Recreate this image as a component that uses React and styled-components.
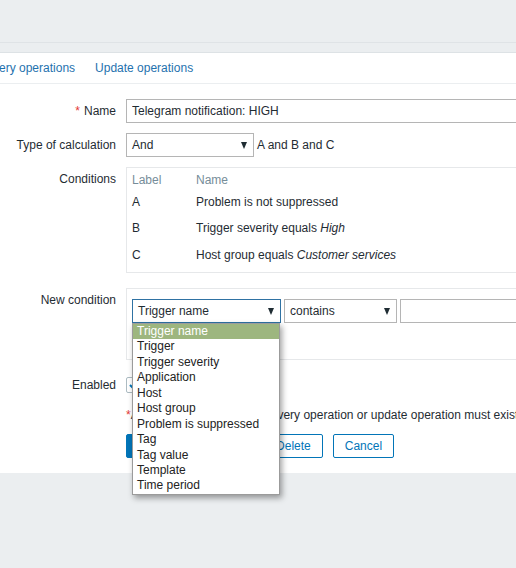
import React from 'react';
import styled, { createGlobalStyle } from 'styled-components';

const Global = createGlobalStyle`
  html, body { margin: 0; padding: 0; overflow: hidden; background: #ebeef0; }
  body { font-family: "Liberation Sans", Arial, sans-serif; font-size: 12px; color: #1f2c33; }
  * { box-sizing: border-box; }
`;

const Page = styled.div`
  width: 516px;
  height: 568px;
  overflow: hidden;
  background: #ebeef0;
`;

const TopBar = styled.div`
  height: 43px;
  border-bottom: 1px solid #dfe3e6;
  margin-bottom: 9px;
`;

const Panel = styled.div`
  background: #fff;
  border-top: 1px solid #dde2e5;
  padding-bottom: 15px;
`;

const Tabs = styled.div`
  display: flex;
  height: 31px;
  margin-left: -45px;
  border-bottom: 1px solid #ebeef0;
`;

const Tab = styled.span`
  padding: 1px 10px 0;
  line-height: 29px;
  color: #1f72ae;
  white-space: nowrap;
`;

const Form = styled.div`
  padding-top: 15px;
`;

const Row = styled.div`
  display: flex;
  align-items: flex-start;
  margin-top: ${p => p.$top || 0}px;
`;

const Label = styled.div`
  flex: 0 0 126px;
  padding-right: 10px;
  text-align: right;
  line-height: 24px;
  white-space: nowrap;
`;

const Asterisk = styled.span`
  color: #e33734;
  margin-right: ${p => p.$gap || 0}px;
`;

const Field = styled.div`
  display: flex;
  align-items: center;
  flex-wrap: nowrap;
  white-space: nowrap;
  position: relative;
`;

const TextInput = styled.input`
  width: ${p => p.$w}px;
  height: 24px;
  flex-shrink: 0;
  border: 1px solid #b5b5b5;
  padding: 0 5px;
  font: inherit;
  color: #1f2c33;
  background: #fff;
  outline: none;
`;

const SelectBox = styled.div`
  position: relative;
  flex-shrink: 0;
  display: flex;
  align-items: center;
  justify-content: space-between;
  width: ${p => p.$w}px;
  height: 24px;
  padding: 0 6px 0 5px;
  border: 1px solid ${p => (p.$focus ? '#2f72a3' : '#b5b5b5')};
  background: #fff;
  margin-right: ${p => p.$mr || 0}px;
`;

const Arrow = styled.span`
  width: 0;
  height: 0;
  border-left: 3.5px solid transparent;
  border-right: 3.5px solid transparent;
  border-top: 7px solid #1f2c33;
`;

const Hint = styled.span`
  margin-left: 3px;
`;

const Box = styled.div`
  width: 453px;
  flex-shrink: 0;
  border: 1px solid #e6e8ea;
  padding: ${p => p.$pad};
`;

const CondTable = styled.div`
  display: grid;
  grid-template-columns: 64px 1fr;
`;

const HeadCell = styled.div`
  color: #768d99;
  height: 15.5px;
  line-height: 15.5px;
`;

const Cell = styled.div`
  height: 26.5px;
  line-height: 26.5px;
  white-space: nowrap;
`;

const NewCondLine = styled.div`
  display: flex;
  align-items: center;
`;

const AddLink = styled.div`
  line-height: 31px;
  color: #1f72ae;
`;

const DropList = styled.ul`
  position: absolute;
  top: calc(100% + 1px);
  left: -1px;
  width: 148px;
  margin: 0;
  padding: 0;
  list-style: none;
  background: #fff;
  border: 1px solid #9b9b9b;
  box-shadow: 2px 3px 6px rgba(0, 0, 0, 0.38);
  z-index: 10;
`;

const Option = styled.li`
  height: 15.45px;
  line-height: 15.45px;
  padding: 0 4px;
  white-space: nowrap;
  color: ${p => (p.$active ? '#fff' : '#222')};
  background: ${p => (p.$active ? '#9db67f' : 'transparent')};
`;

const Checkbox = styled.span`
  display: inline-flex;
  align-items: center;
  justify-content: center;
  width: 16px;
  height: 16px;
  margin-top: 4px;
  border: 1px solid #acbbc2;
  border-radius: 2px;
  background: #fff;
`;

const Warning = styled.div`
  line-height: 20px;
  white-space: nowrap;
`;

const Buttons = styled.div`
  display: flex;
  gap: 10px;
`;

const Button = styled.button`
  height: 24px;
  padding: 0 11px;
  border: 1px solid #0275b8;
  border-radius: 2px;
  font: inherit;
  color: ${p => (p.$primary ? '#fff' : '#0275b8')};
  background: ${p => (p.$primary ? '#0275b8' : '#fff')};
  cursor: pointer;
`;

const options = [
  'Trigger name',
  'Trigger',
  'Trigger severity',
  'Application',
  'Host',
  'Host group',
  'Problem is suppressed',
  'Tag',
  'Tag value',
  'Template',
  'Time period',
];

export default function App() {
  return (
    <Page>
      <Global />
      <TopBar />
      <Panel>
        <Tabs>
          <Tab>Recovery operations</Tab>
          <Tab>Update operations</Tab>
        </Tabs>
        <Form>
          <Row>
            <Label><Asterisk $gap={4}>*</Asterisk>Name</Label>
            <Field>
              <TextInput $w={453} readOnly value="Telegram notification: HIGH" />
            </Field>
          </Row>
          <Row $top={10}>
            <Label>Type of calculation</Label>
            <Field>
              <SelectBox $w={128}>
                <span>And</span>
                <Arrow />
              </SelectBox>
              <Hint>A and B and C</Hint>
            </Field>
          </Row>
          <Row $top={10}>
            <Label>Conditions</Label>
            <Box $pad="5px 5px 4px 5px">
              <CondTable>
                <HeadCell>Label</HeadCell>
                <HeadCell>Name</HeadCell>
                <Cell>A</Cell>
                <Cell>Problem is not suppressed</Cell>
                <Cell>B</Cell>
                <Cell>Trigger severity equals <i>High</i></Cell>
                <Cell>C</Cell>
                <Cell>Host group equals <i>Customer services</i></Cell>
              </CondTable>
            </Box>
          </Row>
          <Row $top={15}>
            <Label>New condition</Label>
            <Box $pad="10px 5px 5px 5px">
              <NewCondLine>
                <SelectBox $w={149} $focus $mr={3}>
                  <span>Trigger name</span>
                  <Arrow />
                  <DropList>
                    {options.map((o, i) => (
                      <Option key={o} $active={i === 0}>{o}</Option>
                    ))}
                  </DropList>
                </SelectBox>
                <SelectBox $w={113} $mr={3}>
                  <span>contains</span>
                  <Arrow />
                </SelectBox>
                <TextInput $w={200} readOnly value="" />
              </NewCondLine>
              <AddLink>Add</AddLink>
            </Box>
          </Row>
          <Row $top={13}>
            <Label>Enabled</Label>
            <Checkbox>
              <svg width="10" height="8" viewBox="0 0 10 8">
                <path d="M1 4 L4 7 L9 1" fill="none" stroke="#0275b8" strokeWidth="2" />
              </svg>
            </Checkbox>
          </Row>
          <Row $top={8}>
            <Label />
            <Warning>
              <Asterisk>*</Asterisk>At least one operation, recovery operation or update operation must exist.
            </Warning>
          </Row>
          <Row $top={9}>
            <Label />
            <Buttons>
              <Button $primary>Update</Button>
              <Button>Clone</Button>
              <Button>Delete</Button>
              <Button>Cancel</Button>
            </Buttons>
          </Row>
        </Form>
      </Panel>
    </Page>
  );
}
